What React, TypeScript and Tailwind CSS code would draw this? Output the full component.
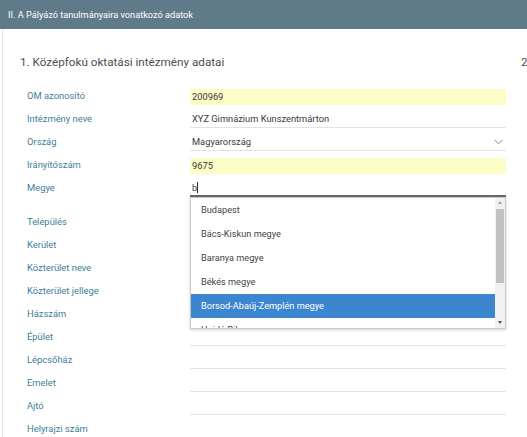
import { ReactNode } from 'react';

type Row = {
  label: string;
  value?: ReactNode;
  kind?: 'yellow' | 'line' | 'select' | 'focus';
};

const top: Row[] = [
  { label: 'OM azonosító', value: '200969', kind: 'yellow' },
  { label: 'Intézmény neve', value: 'XYZ Gimnázium Kunszentmárton' },
  { label: 'Ország', value: 'Magyarország', kind: 'select' },
  { label: 'Irányítószám', value: '9675', kind: 'yellow' },
];

const bottom = [
  'Település',
  'Kerület',
  'Közterület neve',
  'Közterület jellege',
  'Házszám',
  'Épület',
  'Lépcsőház',
  'Emelet',
  'Ajtó',
  'Helyrajzi szám',
];

const options = [
  'Budapest',
  'Bács-Kiskun megye',
  'Baranya megye',
  'Békés megye',
  'Borsod-Abaúj-Zemplén megye',
  'Hajdú-Bihar megye',
];

function Field({ row }: { row: Row }) {
  const base = 'w-[316px] h-[16px] flex items-center px-[2px] text-[9.3px] text-[#3a3a3a]';
  if (row.kind === 'yellow') {
    return <div className={`${base} bg-[#fbfcc6]`}>{row.value}</div>;
  }
  if (row.kind === 'select') {
    return (
      <div className={`${base} border-b border-[#e2e2e2] justify-between`}>
        <span>{row.value}</span>
        <svg width="9" height="6" viewBox="0 0 9 6" className="mr-[1px]">
          <path d="M0.5 0.8 L4.5 4.8 L8.5 0.8" fill="none" stroke="#8a8a8a" strokeWidth="1" />
        </svg>
      </div>
    );
  }
  return <div className={`${base} border-b border-[#e2e2e2]`}>{row.value}</div>;
}

function Label({ children }: { children: ReactNode }) {
  return <div className="w-[170px] pl-[7px] text-[9.4px] text-[#3e7e98]">{children}</div>;
}

function Dropdown() {
  return (
    <div className="absolute left-0 top-full w-[316px] h-[132px] bg-white border border-[#c9c9c9] shadow-[0_1px_3px_rgba(0,0,0,0.18)] flex z-10">
      <div className="flex-1 overflow-hidden">
        {options.map((o, i) => (
          <div
            key={o}
            className={
              i === 4
                ? 'h-[24px] pl-[10px] flex items-center text-[9.2px] bg-[#3b86cf] text-white'
                : 'h-[24px] pl-[10px] flex items-center text-[9.2px] text-[#444]'
            }
          >
            {o}
          </div>
        ))}
      </div>
      <div className="w-[10px] bg-[#f1f1f1] flex flex-col items-center">
        <div className="h-[10px] flex items-center justify-center">
          <div className="w-0 h-0 border-l-[2.5px] border-r-[2.5px] border-b-[3px] border-l-transparent border-r-transparent border-b-[#a3a3a3]" />
        </div>
        <div className="mt-[1px] w-[8px] h-[74px] bg-[#c1c1c1]" />
        <div className="flex-1" />
        <div className="h-[10px] flex items-center justify-center">
          <div className="w-0 h-0 border-l-[2.5px] border-r-[2.5px] border-t-[3px] border-l-transparent border-r-transparent border-t-[#505050]" />
        </div>
      </div>
    </div>
  );
}

export default function App() {
  return (
    <div className="w-[527px] h-[437px] overflow-hidden bg-white font-['Roboto',sans-serif]">
      <div className="h-[29px] bg-[#5f7b8a] px-2 flex items-center text-white text-[9.2px]">
        II. A Pályázó tanulmányaira vonatkozó adatok
      </div>
      <div className="flex ml-[2px] border-l border-[#e6e6e6] h-[408px]">
        <div className="w-[518px] shrink-0 pl-[17px]">
          <h2 className="pt-[24px] leading-[18px] text-[11.7px] text-[#4d4d4d] font-normal">
            1. Középfokú oktatási intézmény adatai
          </h2>
          <div className="mt-[14px]">
            {top.map((r) => (
              <div key={r.label} className="h-[23px] flex items-center">
                <Label>{r.label}</Label>
                <Field row={r} />
              </div>
            ))}
            <div className="h-[23px] flex items-center mb-[11px]">
              <Label>Megye</Label>
              <div className="relative">
                <div className="w-[316px] h-[16px] flex items-center px-[2px] text-[9.3px] text-[#3a3a3a] border-b-2 border-[#686868]">
                  <span>b</span>
                  <span className="w-px h-[11px] bg-[#333]" />
                </div>
                <Dropdown />
              </div>
            </div>
            {bottom.map((l) => (
              <div key={l} className="h-[23px] flex items-center">
                <Label>{l}</Label>
                <div className="w-[316px] h-[16px] border-b border-[#e2e2e2]" />
              </div>
            ))}
          </div>
        </div>
        <div className="shrink-0">
          <h2 className="pt-[24px] leading-[18px] text-[11.7px] text-[#4d4d4d] whitespace-nowrap">
            2. Egyéb adatok
          </h2>
        </div>
      </div>
    </div>
  );
}
